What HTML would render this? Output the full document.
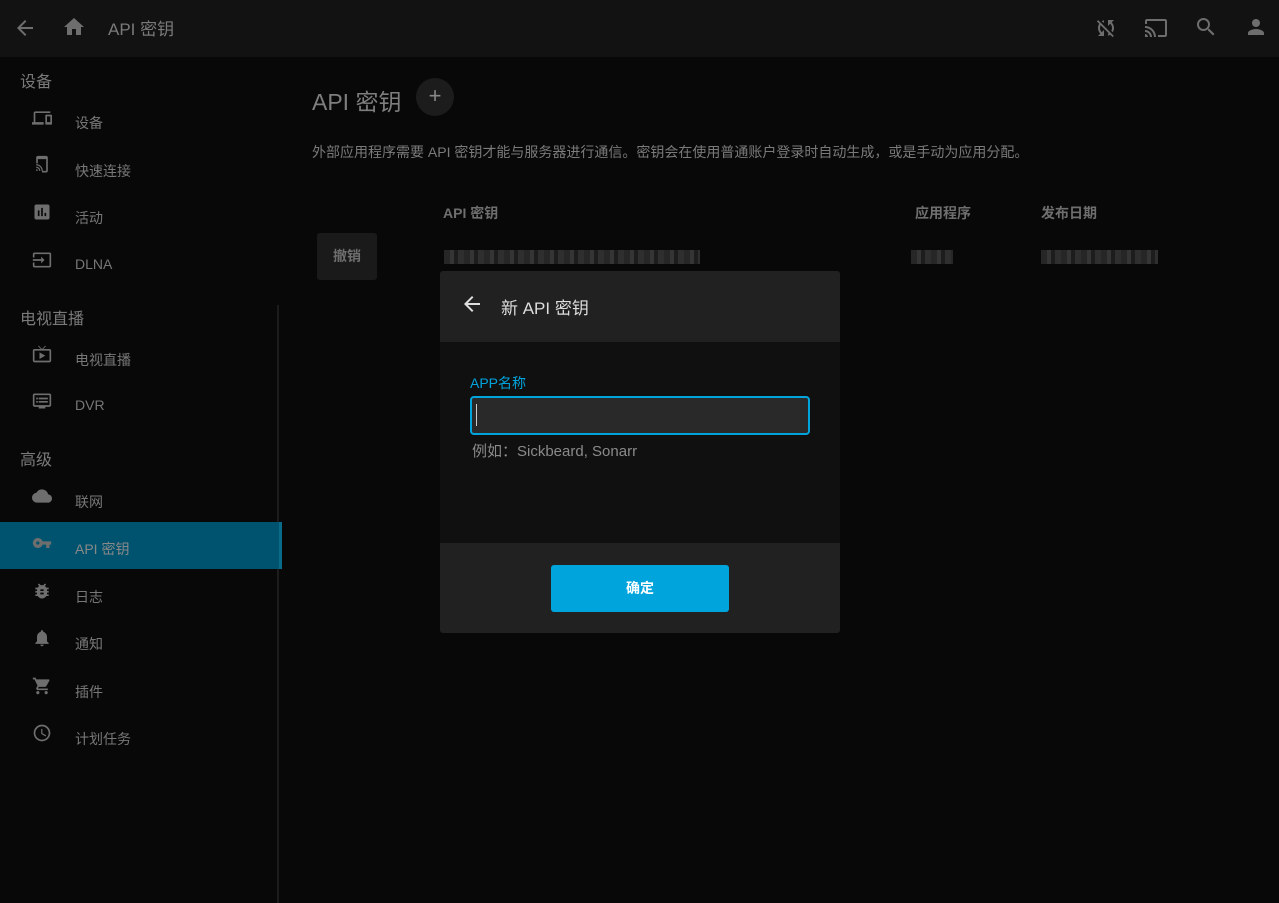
<!DOCTYPE html>
<html><head><meta charset="utf-8"><style>
*{margin:0;padding:0;box-sizing:border-box}
body{width:1279px;height:903px;background:#080808;font-family:"Liberation Sans","Noto Sans CJK SC",sans-serif;color:#7a7a7a;position:relative;overflow:hidden}
.a{position:absolute}
.hdr{left:0;top:0;width:1279px;height:57px;background:#121212}
.sh{font-size:16px;color:#7a7a7a;left:20px}
.it{left:75px;font-size:14px;color:#777}
.ic{left:32px;width:20px;height:20px}
svg{fill:#6e6e6e}
.blur{height:14px;background:repeating-linear-gradient(90deg,#2a2a2a 0 6px,#3a3a3a 6px 10px,#1f1f1f 10px 14px,#333 14px 20px);opacity:.9}
</style></head><body>
<div class="a hdr"></div>
<svg class="a" style="left:13px;top:16px" width="24" height="24" viewBox="0 0 24 24"><path d="M20 11H7.83l5.59-5.59L12 4l-8 8 8 8 1.41-1.41L7.83 13H20v-2z"/></svg>
<svg class="a" style="left:62px;top:15px" width="24" height="24" viewBox="0 0 24 24"><path d="M10 20v-6h4v6h5v-8h3L12 3 2 12h3v8z"/></svg>
<div class="a" style="left:108px;top:15px;font-size:17px;color:#7a7a7a">API 密钥</div>
<svg class="a" style="left:1094px;top:16px" width="24" height="24" viewBox="0 0 24 24"><path d="M10 6.35V4.26c-.8.21-1.550.54-2.230.96l1.46 1.46c.25-.12.5-.24.77-.33zm-7.14-.94l2.36 2.36C4.45 8.99 4 10.44 4 12c0 2.21.91 4.2 2.36 5.64L4 20h6v-6l-2.24 2.240C6.68 15.15 6 13.66 6 12c0-1 .25-1.94.68-2.77l8.08 8.08c-.25.13-.5.25-.77.34v2.09c.8-.21 1.550-.54 2.230-.96l2.36 2.36 1.27-1.27L4.14 4.14 2.86 5.41zM20 4h-6v6l2.24-2.24C17.32 8.85 18 10.34 18 12c0 1-.25 1.94-.68 2.77l1.46 1.46C19.55 15.01 20 13.56 20 12c0-2.21-.91-4.2-2.36-5.64L20 4z"/></svg>
<svg class="a" style="left:1144px;top:16px" width="24" height="24" viewBox="0 0 24 24"><path d="M21 3H3c-1.1 0-2 .9-2 2v3h2V5h18v14h-7v2h7c1.1 0 2-.9 2-2V5c0-1.1-.9-2-2-2zM1 18v3h3c0-1.66-1.34-3-3-3zm0-4v2c2.76 0 5 2.24 5 5h2c0-3.87-3.13-7-7-7zm0-4v2c4.97 0 9 4.03 9 9h2c0-6.08-4.93-11-11-11z"/></svg>
<svg class="a" style="left:1194px;top:15px" width="24" height="24" viewBox="0 0 24 24"><path d="M15.5 14h-.79l-.28-.27A6.47 6.47 0 0016 9.5 6.5 6.5 0 109.5 16c1.61 0 3.09-.59 4.23-1.57l.27.28v.79l5 4.99L20.49 19l-4.99-5zm-6 0C7.01 14 5 11.99 5 9.5S7.01 5 9.5 5 14 7.01 14 9.5 11.99 14 9.5 14z"/></svg>
<svg class="a" style="left:1244px;top:15px" width="24" height="24" viewBox="0 0 24 24"><path d="M12 12c2.21 0 4-1.79 4-4s-1.79-4-4-4-4 1.79-4 4 1.79 4 4 4zm0 2c-2.67 0-8 1.34-8 4v2h16v-2c0-2.66-5.33-4-8-4z"/></svg>

<div class="a sh" style="top:68px">设备</div>
<div class="a sh" style="top:305px">电视直播</div>
<div class="a sh" style="top:446px">高级</div>
<div class="a" style="left:277px;top:305px;width:2px;height:598px;background:#1c1c1c"></div>
<div class="a" style="left:0;top:522px;width:282px;height:47px;background:#00536e"></div>
<div class="a" style="left:279px;top:522px;width:3px;height:47px;background:#0a6a8a"></div>

<svg class="a ic" style="top:108px" viewBox="0 0 24 24"><path d="M4 6h18V4H4c-1.1 0-2 .9-2 2v11H0v3h14v-3H4V6zm19 2h-6c-.55 0-1 .45-1 1v10c0 .55.45 1 1 1h6c.55 0 1-.45 1-1V9c0-.55-.45-1-1-1zm-1 9h-4v-7h4v7z"/></svg>
<div class="a it" style="top:113px">设备</div>
<svg class="a ic" style="top:155px" viewBox="0 0 24 24"><path d="M17 1H7c-1.1 0-2 .9-2 2v7h2V5h10v14h-5v2h5c1.1 0 2-.9 2-2V3c0-1.1-.9-2-2-2zM5 17v2h2c0-1.1-.9-2-2-2zm0-3v1.5c1.93 0 3.5 1.57 3.5 3.5H10c0-2.76-2.24-5-5-5zm0-3v1.5c3.59 0 6.5 2.91 6.5 6.5H13c0-4.42-3.58-8-8-8z"/></svg>
<div class="a it" style="top:161px">快速连接</div>
<svg class="a ic" style="top:202px" viewBox="0 0 24 24"><path d="M19 3H5c-1.1 0-2 .9-2 2v14c0 1.1.9 2 2 2h14c1.1 0 2-.9 2-2V5c0-1.1-.9-2-2-2zM9 17H7v-7h2v7zm4 0h-2V7h2v10zm4 0h-2v-4h2v4z"/></svg>
<div class="a it" style="top:208px">活动</div>
<svg class="a ic" style="top:250px" viewBox="0 0 24 24"><path d="M21 3.01H3c-1.1 0-2 .9-2 2V9h2V4.99h18v14.03H3V15H1v4.01c0 1.1.9 1.98 2 1.98h18c1.1 0 2-.88 2-1.98v-14a2 2 0 00-2-2zM11 16l4-4-4-4v3H1v2h10v3z"/></svg>
<div class="a it" style="top:256px">DLNA</div>
<svg class="a ic" style="top:344px" viewBox="0 0 24 24"><path d="M21 6h-7.59l3.29-3.29L16 2l-4 4-4-4-.71.71L10.59 6H3c-1.1 0-2 .89-2 2v12c0 1.1.9 2 2 2h18c1.1 0 2-.9 2-2V8c0-1.11-.9-2-2-2zm0 14H3V8h18v12zM9 10v8l7-4z"/></svg>
<div class="a it" style="top:350px">电视直播</div>
<svg class="a ic" style="top:391px" viewBox="0 0 24 24"><path d="M21 3H3c-1.1 0-2 .9-2 2v12c0 1.1.9 2 2 2h5v2h8v-2h5c1.1 0 1.99-.9 1.99-2L23 5c0-1.1-.9-2-2-2zm0 14H3V5h18v12zm-2-9H8v2h11V8zm0 4H8v2h11v-2zM7 8H5v2h2V8zm0 4H5v2h2v-2z"/></svg>
<div class="a it" style="top:397px">DVR</div>
<svg class="a ic" style="top:486px" viewBox="0 0 24 24"><path d="M19.35 10.04A7.49 7.49 0 0012 4C9.11 4 6.6 5.64 5.35 8.04A5.994 5.994 0 000 14c0 3.31 2.69 6 6 6h13c2.76 0 5-2.24 5-5 0-2.64-2.05-4.78-4.65-4.96z"/></svg>
<div class="a it" style="top:492px">联网</div>
<svg class="a ic" style="top:533px" viewBox="0 0 24 24"><path d="M12.65 10A5.99 5.99 0 007 6c-3.31 0-6 2.69-6 6s2.69 6 6 6a5.99 5.99 0 005.65-4H17v4h4v-4h2v-4H12.65zM7 14c-1.1 0-2-.9-2-2s.9-2 2-2 2 .9 2 2-.9 2-2 2z"/></svg>
<div class="a it" style="top:539px;color:#888">API 密钥</div>
<svg class="a ic" style="top:581px" viewBox="0 0 24 24"><path d="M20 8h-2.81a5.985 5.985 0 00-1.82-1.96L17 4.41 15.59 3l-2.17 2.17a6.002 6.002 0 00-2.83 0L8.41 3 7 4.41l1.62 1.63C7.88 6.55 7.26 7.22 6.81 8H4v2h2.09c-.05.33-.09.66-.09 1v1H4v2h2v1c0 .34.04.67.09 1H4v2h2.81c1.04 1.79 2.97 3 5.19 3s4.15-1.21 5.19-3H20v-2h-2.09c.05-.33.09-.66.09-1v-1h2v-2h-2v-1c0-.34-.04-.67-.09-1H20V8zm-6 8h-4v-2h4v2zm0-4h-4v-2h4v2z"/></svg>
<div class="a it" style="top:587px">日志</div>
<svg class="a ic" style="top:628px" viewBox="0 0 24 24"><path d="M12 22c1.1 0 2-.9 2-2h-4c0 1.1.89 2 2 2zm6-6v-5c0-3.07-1.64-5.64-4.5-6.32V4c0-.83-.67-1.5-1.5-1.5s-1.5.67-1.5 1.5v.68C7.63 5.36 6 7.920 6 11v5l-2 2v1h16v-1l-2-2z"/></svg>
<div class="a it" style="top:634px">通知</div>
<svg class="a ic" style="top:676px" viewBox="0 0 24 24"><path d="M7 18c-1.1 0-1.99.9-1.99 2S5.9 22 7 22s2-.9 2-2-.9-2-2-2zM1 2v2h2l3.6 7.59-1.35 2.45c-.16.28-.25.61-.25.96 0 1.1.9 2 2 2h12v-2H7.42c-.14 0-.25-.11-.25-.25l.03-.12.9-1.63h7.45c.75 0 1.41-.41 1.75-1.03l3.58-6.49A1.003 1.003 0 0020 4H5.21l-.94-2H1zm16 16c-1.1 0-1.99.9-1.99 2s.89 2 1.99 2 2-.9 2-2-.9-2-2-2z"/></svg>
<div class="a it" style="top:682px">插件</div>
<svg class="a ic" style="top:723px" viewBox="0 0 24 24"><path d="M11.99 2C6.47 2 2 6.48 2 12s4.47 10 9.99 10C17.52 22 22 17.52 22 12S17.52 2 11.99 2zM12 20c-4.42 0-8-3.58-8-8s3.58-8 8-8 8 3.58 8 8-3.58 8-8 8zm.5-13H11v6l5.25 3.15.75-1.23-4.5-2.67z"/></svg>
<div class="a it" style="top:729px">计划任务</div>

<div class="a" style="left:312px;top:83px;font-size:23px;color:#7e7e7e">API 密钥</div>
<div class="a" style="left:416px;top:78px;width:38px;height:38px;border-radius:50%;background:#1c1c1c;color:#888;font-size:22px;text-align:center;line-height:36px">+</div>
<div class="a" style="left:312px;top:142px;font-size:14px;color:#7a7a7a">外部应用程序需要 API 密钥才能与服务器进行通信。密钥会在使用普通账户登录时自动生成，或是手动为应用分配。</div>
<div class="a" style="left:443px;top:203px;font-size:14px;font-weight:bold;color:#6e6e6e">API 密钥</div>
<div class="a" style="left:915px;top:203px;font-size:14px;font-weight:bold;color:#6e6e6e">应用程序</div>
<div class="a" style="left:1041px;top:203px;font-size:14px;font-weight:bold;color:#6e6e6e">发布日期</div>
<div class="a" style="left:317px;top:233px;width:60px;height:47px;background:#1a1a1a;border-radius:3px;color:#6e6e6e;font-weight:bold;font-size:14px;text-align:center;line-height:47px">撤销</div>
<div class="a blur" style="left:444px;top:250px;width:256px"></div>
<div class="a blur" style="left:911px;top:250px;width:42px"></div>
<div class="a blur" style="left:1041px;top:250px;width:117px"></div>

<div class="a" style="left:440px;top:271px;width:400px;height:362px;border-radius:3px;overflow:hidden;background:#101010">
<div class="a" style="left:0;top:0;width:400px;height:71px;background:#212121"></div>
<svg class="a" style="left:20px;top:21px;fill:#ddd" width="24" height="24" viewBox="0 0 24 24"><path d="M20 11H7.83l5.59-5.59L12 4l-8 8 8 8 1.41-1.41L7.83 13H20v-2z"/></svg>
<div class="a" style="left:61px;top:23px;font-size:17px;color:#ddd">新 API 密钥</div>
<div class="a" style="left:30px;top:102px;font-size:14px;color:#00a4dc">APP名称</div>
<div class="a" style="left:30px;top:125px;width:340px;height:39px;background:#292929;border:2px solid #00a4dc;border-radius:4px"></div>
<div class="a" style="left:36px;top:133px;width:1px;height:22px;background:#ccc"></div>
<div class="a" style="left:32px;top:169px;font-size:15px;color:#8a8a8a">例如：Sickbeard, Sonarr</div>
<div class="a" style="left:0;top:272px;width:400px;height:90px;background:#212121"></div>
<div class="a" style="left:111px;top:294px;width:178px;height:47px;background:#00a4dc;border-radius:3px;color:#fff;font-weight:bold;font-size:14px;text-align:center;line-height:47px">确定</div>
</div>
</body></html>
